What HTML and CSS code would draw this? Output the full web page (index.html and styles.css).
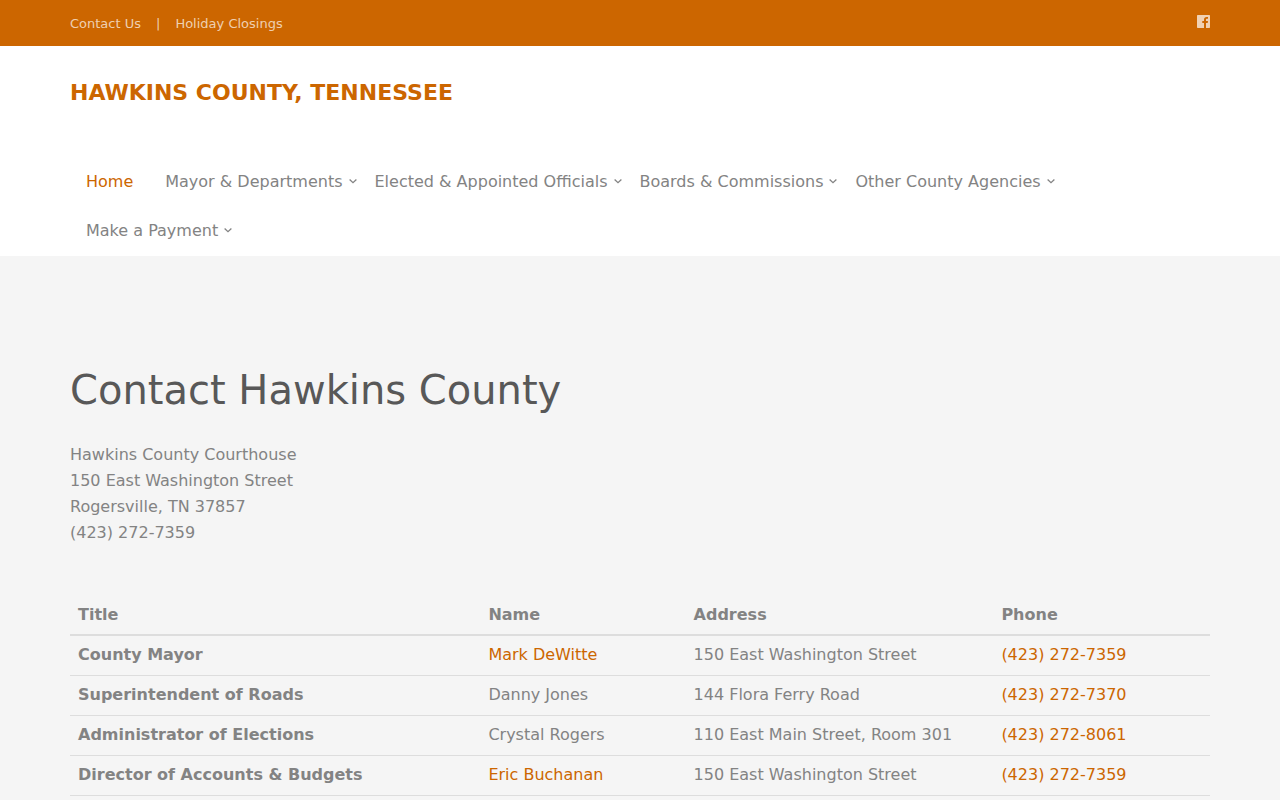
FILE: index.html
```html
<!DOCTYPE html>
<html lang="en">
<head>
  <meta charset="UTF-8" />
  <meta name="viewport" content="width=device-width, initial-scale=1.0"/>
  <title>Contact Us - Hawkins County, Tennessee</title>
  <link rel="stylesheet" href="styles.css">
</head>
<body>
  <svg width="0" height="0" class="sprite" aria-hidden="true">
    <symbol id="chevron" viewBox="0 0 9 8">
      <path d="M1.6 1.6 5 4.7 8.4 1.6" fill="none" stroke="currentColor" stroke-width="1.3"/>
    </symbol>
  </svg>

  <div class="top-bar">
    <div class="container">
      <div class="top-links">
        <a href="#">Contact Us</a>
        <span>|</span>
        <a href="#">Holiday Closings</a>
      </div>
      <a class="social" href="#" aria-label="Facebook">
        <svg width="13" height="13" viewBox="0 0 13 13">
          <path fill="currentColor" d="M.7 0H12.3Q13 0 13 .7V12.3Q13 13 12.3 13H9V8h1.7l.3-2H9V4.700c0-.6.2-1 1-1h1V2C10.800 1.900 10.200 1.900 9.500 1.900 8 1.900 7 2.800 7 4.500V6H5.300v2H7v5H.7Q0 13 0 12.300V.7Q0 0 .7 0Z"/>
        </svg>
      </a>
    </div>
  </div>

  <header>
    <div class="container">
      <a class="brand" href="#">HAWKINS COUNTY, TENNESSEE</a>
      <nav>
        <ul class="menu">
          <li><a class="active" href="#">Home</a></li>
          <li class="dropdown"><a href="#">Mayor &amp; Departments<svg><use href="#chevron"/></svg></a></li>
          <li class="dropdown"><a href="#">Elected &amp; Appointed Officials<svg><use href="#chevron"/></svg></a></li>
          <li class="dropdown"><a href="#">Boards &amp; Commissions<svg><use href="#chevron"/></svg></a></li>
          <li class="dropdown"><a href="#">Other County Agencies<svg><use href="#chevron"/></svg></a></li>
          <li class="dropdown"><a href="#">Make a Payment<svg><use href="#chevron"/></svg></a></li>
        </ul>
      </nav>
    </div>
  </header>

  <main>
    <div class="container">
      <h1>Contact Hawkins County</h1>
      <address>
        Hawkins County Courthouse<br>
        150 East Washington Street<br>
        Rogersville, TN 37857<br>
        (423) 272-7359
      </address>

      <table>
        <thead>
          <tr>
            <th class="col-title" scope="col">Title</th>
            <th class="col-name" scope="col">Name</th>
            <th class="col-address" scope="col">Address</th>
            <th class="col-phone" scope="col">Phone</th>
          </tr>
        </thead>
        <tbody>
          <tr>
            <th scope="row">County Mayor</th>
            <td><a href="#">Mark DeWitte</a></td>
            <td>150 East Washington Street</td>
            <td><a href="tel:4232727359">(423) 272-7359</a></td>
          </tr>
          <tr>
            <th scope="row">Superintendent of Roads</th>
            <td>Danny Jones</td>
            <td>144 Flora Ferry Road</td>
            <td><a href="tel:4232727370">(423) 272-7370</a></td>
          </tr>
          <tr>
            <th scope="row">Administrator of Elections</th>
            <td>Crystal Rogers</td>
            <td>110 East Main Street, Room 301</td>
            <td><a href="tel:4232728061">(423) 272-8061</a></td>
          </tr>
          <tr>
            <th scope="row">Director of Accounts &amp; Budgets</th>
            <td><a href="#">Eric Buchanan</a></td>
            <td>150 East Washington Street</td>
            <td><a href="tel:4232727359">(423) 272-7359</a></td>
          </tr>
        </tbody>
      </table>
    </div>
  </main>
</body>
</html>
```
FILE: styles.css
```css
* {
  margin: 0;
  padding: 0;
  box-sizing: border-box;
}
body {
  font-family: "DejaVu Sans", sans-serif;
  font-size: 16px;
  line-height: 26px;
  color: #838383;
  background-color: #f5f5f5;
}
a {
  color: #cc6600;
  text-decoration: none;
}
.sprite {
  display: block;
}
.container {
  width: 100%;
  max-width: 1170px;
  margin: 0 auto;
  padding: 0 15px;
}

/* top bar */
.top-bar {
  padding: 11px 0 9px;
  background-color: #cc6600;
  color: rgba(255, 255, 255, 0.7);
  font-size: 13px;
}
.top-bar .container {
  display: flex;
  justify-content: space-between;
}
.top-bar a {
  color: inherit;
}
.top-links {
  display: flex;
  gap: 15px;
}
.social {
  line-height: 20px;
}
.social svg {
  vertical-align: middle;
}

/* header */
header {
  background-color: #fff;
}
.brand {
  display: block;
  padding: 34px 0 51px;
  font-size: 22px;
  font-weight: bold;
}
.menu {
  display: flex;
  flex-wrap: wrap;
  padding-bottom: 1px;
  list-style: none;
}
.menu a {
  display: flex;
  align-items: center;
  height: 49px;
  padding: 0 16px;
  color: #838383;
}
.menu a.active {
  color: #cc6600;
}
.menu .dropdown a {
  padding-right: 2px;
}
.menu svg {
  width: 9px;
  height: 8px;
  margin-left: 5px;
}

/* contact page */
main {
  padding: 104px 0;
}
h1 {
  margin-bottom: 22px;
  font-size: 40px;
  font-weight: normal;
  line-height: 60px;
  color: #585858;
}
address {
  margin-bottom: 49px;
  font-style: normal;
}
table {
  width: 100%;
  border-collapse: collapse;
  table-layout: fixed;
  line-height: 23px;
}
th,
td {
  padding: 7px 8px 9px;
  text-align: left;
  border-bottom: 1px solid #ddd;
}
thead th {
  padding: 8px;
  border-bottom-width: 2px;
}
.col-title {
  width: 36%;
}
.col-name {
  width: 18%;
}
.col-address {
  width: 27%;
}
.col-phone {
  width: 19%;
}
```
